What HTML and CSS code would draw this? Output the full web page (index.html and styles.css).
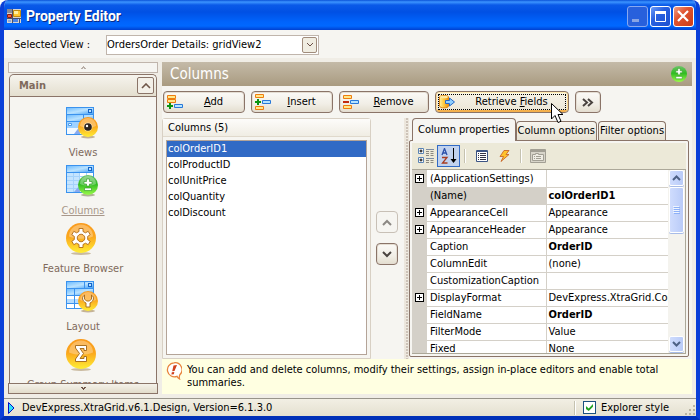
FILE: index.html
```html
<!DOCTYPE html>
<html lang="en">
<head>
    <meta charset="UTF-8">
    <meta name="viewport" content="width=device-width, initial-scale=1.0">
    <title>Property Editor</title>
    <link rel="stylesheet" href="styles.css">
</head>
<body>
    <!-- Shared gradients and shapes -->
    <svg class="defs" width="0" height="0" aria-hidden="true">
        <defs>
            <linearGradient id="orange" x1="0" y1="0" x2="0" y2="1">
                <stop offset="0" stop-color="#f99a1c"/>
                <stop offset="0.45" stop-color="#fba61d"/>
                <stop offset="1" stop-color="#ffee35"/>
            </linearGradient>
            <linearGradient id="green" x1="0" y1="0" x2="0" y2="1">
                <stop offset="0" stop-color="#6fc46a"/>
                <stop offset="0.45" stop-color="#2fbb22"/>
                <stop offset="1" stop-color="#9bfa4a"/>
            </linearGradient>
            <linearGradient id="blue" x1="0" y1="0" x2="1" y2="1">
                <stop offset="0" stop-color="#6fbcff"/>
                <stop offset="0.5" stop-color="#b9e2ff"/>
                <stop offset="1" stop-color="#4aa3f5"/>
            </linearGradient>
            <linearGradient id="gold" x1="0" y1="0" x2="1" y2="0">
                <stop offset="0" stop-color="#fff0a0"/>
                <stop offset="0.5" stop-color="#ffc83c"/>
                <stop offset="1" stop-color="#e98a10"/>
            </linearGradient>
            <symbol id="sheet" viewBox="0 0 28 28">
                <rect width="28" height="28" fill="#3a92ee"/>
                <rect x="1" y="1" width="26" height="6" fill="url(#blue)"/>
                <rect x="22.500" y="2.500" width="3" height="3" fill="#b9e2ff" stroke="#1464c8"/>
            </symbol>
            <symbol id="gloss" viewBox="0 0 20 20">
                <path d="M2 9a8 8 0 0 1 16 0c-5 2-11 2-16 0z" fill="#fff" opacity=".3"/>
            </symbol>
        </defs>
    </svg>

    <div class="window">
        <header class="titlebar">
            <svg width="14" height="14" viewBox="0 0 14 14" aria-hidden="true">
                <rect width="14" height="14" fill="#d6d3ce"/>
                <path d="M0 0h5v4H0z" fill="#8a8a96"/>
                <path d="M5.500 0v14M0 9.500h14M12.500 9v5" stroke="#49506c"/>
                <path d="M.5 5.500h4v3h-4z" fill="#f0603c" stroke="#8c1c10"/>
                <path d="M6.500 1.500h7v6h-7z" fill="#ffc832" stroke="#c08a10"/>
                <path d="M7 2h4v3H7z" fill="#fff0a0"/>
                <path d="M1 11h3v2H1z" fill="#90a8d8"/>
                <path d="M6 10h5v3H6z" fill="#4a84e8"/>
            </svg>
            <h1>Property Editor</h1>
            <button class="caption-btn minimize" aria-label="Minimize" disabled><svg width="18" height="18"><path d="M4 12h7v3H4z" fill="#88a4e4"/></svg></button>
            <button class="caption-btn" aria-label="Maximize"><svg width="18" height="18"><path d="M4.500 4.500h10v10h-10z" fill="none" stroke="#fff"/><path d="M4 4h11v3H4z" fill="#fff"/></svg></button>
            <button class="caption-btn close" aria-label="Close"><svg width="18" height="18"><path d="M4 4l10 10M14 4L4 14" stroke="#fff" stroke-width="2.200"/></svg></button>
        </header>

        <div class="view-bar">
            <label for="view">Selected View :</label>
            <div class="combo">
                <select id="view"><option>OrdersOrder Details: gridView2</option></select>
                <span class="combo-arrow"><svg width="8" height="6"><path d="M1 1l3 3 3-3" fill="none" stroke="#6b5048"/></svg></span>
            </div>
        </div>

        <div class="workspace">
            <nav class="sidebar">
                <button class="nav-scroll" aria-label="Scroll up"><svg width="5" height="3"><path d="M2 0h1v1h1v1h1v1H3V2H2v1H0V2h1V1h1z" fill="#b8aea6"/></svg></button>
                <div class="group">
                    <div class="group-header">
                        <h2>Main</h2>
                        <button class="collapse" aria-label="Collapse"><svg width="10" height="6"><path d="M1 5l4-4 4 4" fill="none" stroke="#6f5648" stroke-width="1.600"/></svg></button>
                    </div>
                    <div class="group-items">
                        <a href="#">
                            <svg width="34" height="32" viewBox="0 0 34 32">
                                <use href="#sheet" width="28" height="28"/>
                                <path d="M1 8h16v6H1zM18 8h9v6h-9z" fill="url(#blue)"/>
                                <path d="M1 15h26v6H1z" fill="#9fd2ff"/>
                                <path d="M1 21h26v6H1z" fill="#f2f9ff"/>
                                <path d="M2.500 16.500h3v2h-3z" fill="#fff" stroke="#4a9cee"/>
                                <path d="M8 27l6-8v8z" fill="#88aaf0"/>
                                <ellipse cx="22" cy="30" rx="7" ry="1.500" fill="#8a6428" opacity=".45"/>
                                <circle cx="22" cy="20" r="10" fill="url(#orange)"/>
                                <use href="#gloss" x="12" y="10" width="20" height="20"/>
                                <circle cx="22" cy="20" r="4.500" fill="#fff" opacity=".5"/>
                                <circle cx="22" cy="20" r="3.800" fill="#2c2420"/>
                                <circle cx="21" cy="19" r="1.200" fill="#fff"/>
                            </svg>
                            <span>Views</span>
                        </a>
                        <a href="#" class="active">
                            <svg width="34" height="32" viewBox="0 0 34 32">
                                <use href="#sheet" width="28" height="28"/>
                                <path d="M1 8h6v19H1zM8 8h6v19H8z" fill="#c4e4ff"/>
                                <path d="M14 8h13v19H14z" fill="#fff"/>
                                <path d="M1 11.500h26M1 15.500h26M1 19.500h26M1 23.500h26M7.500 8v19M13.500 8v19M20.500 8v19" stroke="#a4d2fa"/>
                                <path d="M8 27l6-7v7z" fill="#88aaf0"/>
                                <ellipse cx="22" cy="30" rx="7" ry="1.500" fill="#5a6428" opacity=".45"/>
                                <circle cx="22" cy="20" r="10" fill="url(#green)"/>
                                <use href="#gloss" x="12" y="10" width="20" height="20"/>
                                <path d="M20.500 14h3v2.500H26v2.500h-2.500v2h-3v-2H18v-2.500h2.500zM18.500 23h7v2.500h-7z" fill="#fff" stroke="#279518" stroke-width=".6"/>
                            </svg>
                            <span>Columns</span>
                        </a>
                        <a href="#">
                            <svg width="34" height="32" viewBox="0 0 34 32">
                                <ellipse cx="15" cy="30.500" rx="10" ry="1.500" fill="#8a6428" opacity=".4"/>
                                <circle cx="15" cy="15" r="15" fill="url(#orange)"/>
                                <use href="#gloss" width="30" height="30"/>
                                <path fill-rule="evenodd" d="M13 5.500h4v3l2.500 1.300 2.700-1.500 2 3.400-2.500 1.700v3.200l2.500 1.700-2 3.400-2.700-1.500-2.500 1.300v3h-4v-3l-2.500-1.300-2.700 1.500-2-3.400 2.500-1.700v-3.200l-2.500-1.700 2-3.400 2.700 1.500L13 8.500zM15 11.200a3.800 3.800 0 1 0 .1 0z" fill="#fff" stroke="#b06a14" stroke-width=".9"/>
                            </svg>
                            <span>Feature Browser</span>
                        </a>
                        <a href="#">
                            <svg width="34" height="32" viewBox="0 0 34 32">
                                <use href="#sheet" width="28" height="28"/>
                                <path d="M1 8h7v6H1zM9 8h18v6H9z" fill="url(#blue)"/>
                                <path d="M1 15h7v3H1zM9 15h8v3H9zM1 23h7v4H1zM9 23h8v4H9zM18 15h9v12h-9z" fill="#fff"/>
                                <path d="M1 18h7v4H1zM9 18h8v4H9z" fill="#b4dcff"/>
                                <path d="M18.500 1v6" stroke="#3a92ee"/>
                                <ellipse cx="22" cy="30" rx="7" ry="1.500" fill="#8a6428" opacity=".45"/>
                                <circle cx="22" cy="20" r="10" fill="url(#orange)"/>
                                <use href="#gloss" x="12" y="10" width="20" height="20"/>
                                <path d="M18.500 14v4l2 2h3l2-2v-4c3 2 2.500 6-1.500 8v4h-4v-4c-4-2-4.500-6-1.500-8z" fill="#fff" stroke="#a06414" stroke-width=".9"/>
                            </svg>
                            <span>Layout</span>
                        </a>
                        <a href="#">
                            <svg width="34" height="32" viewBox="0 0 34 32">
                                <ellipse cx="15" cy="30.500" rx="10" ry="1.500" fill="#8a6428" opacity=".4"/>
                                <circle cx="15" cy="15" r="15" fill="url(#orange)"/>
                                <use href="#gloss" width="30" height="30"/>
                                <path d="M9.500 6.500h11v5h-2.500v-2h-4l3.500 5-3.500 5h4v-2h2.500v5h-11v-2.500l4-5.500-4-5.500z" fill="#fff" stroke="#a06414" stroke-width=".9"/>
                            </svg>
                            <span>Group Summary Items</span>
                        </a>
                    </div>
                </div>
                <button class="nav-scroll down" aria-label="Scroll down"><svg width="5" height="3"><path d="M0 0h2v1h1V0h2v1H4v1H3v1H2V2H1V1H0z" fill="#6f5648"/></svg></button>
            </nav>

            <main class="content">
                <div class="page-title">
                    <h2>Columns</h2>
                    <svg width="16" height="16" viewBox="0 0 20 20">
                        <circle cx="10" cy="10" r="10" fill="url(#green)"/>
                        <path d="M8.500 3h3v3H14v2.500h-2.500v2.500h-3V8.500H6V6h2.500zM6 13h8v3H6z" fill="#fff" stroke="#279518" stroke-width=".6"/>
                    </svg>
                </div>

                <div class="page">
                    <div class="toolbar">
                        <button class="btn">
                            <svg width="16" height="14"><path d="M.5.500h8v3h-8zM.5 4.500h8v3h-8z" fill="#ffe88a" stroke="#ee7d10"/><path d="M3 8v6M0 11h6" stroke="#0a9410" stroke-width="2"/><path d="M7.500 9.500h8v3h-8z" fill="#b6e4ff" stroke="#2878d8"/></svg>
                            <span><u>A</u>dd</span>
                        </button>
                        <button class="btn">
                            <svg width="16" height="16"><path d="M.5.500h8v3h-8zM.5 12.500h8v3h-8z" fill="#ffe88a" stroke="#ee7d10"/><path d="M3 5v6M0 8h6" stroke="#0a9410" stroke-width="2"/><path d="M7.500 6.500h8v3h-8z" fill="#b6e4ff" stroke="#2878d8"/></svg>
                            <span><u>I</u>nsert</span>
                        </button>
                        <button class="btn remove">
                            <svg width="16" height="16"><path d="M.5 1.500h8v3h-8zM.5 11.500h8v3h-8z" fill="#ffe88a" stroke="#ee7d10"/><path d="M0 8h6" stroke="#c22a10" stroke-width="2"/><path d="M7.500 6.500h8v3h-8z" fill="#b6e4ff" stroke="#2878d8"/></svg>
                            <span><u>R</u>emove</span>
                        </button>
                        <button class="btn retrieve">
                            <svg width="16" height="14"><path d="M.5 2c0-2 9-2 9 0v9c0 2.500-9 2.500-9 0z" fill="url(#gold)" stroke="#e08a18"/><ellipse cx="5" cy="2" rx="4" ry="1.300" fill="#ffe9a0"/><path d="M6.500 5.500h4v-2.500l5 4-5 4V8.500h-4z" fill="#8fd0ff" stroke="#2668c8"/></svg>
                            <span>Retrieve <u>F</u>ields</span>
                            <svg class="cursor" width="13" height="21" viewBox="0 0 13 21"><path d="M.5.500v15.500l3.500-3.500 3 7 3-1.200-3-6.800h5z" fill="#fff" stroke="#000"/></svg>
                        </button>
                        <button class="btn more" aria-label="More"><svg width="12" height="9"><path d="M1 1l4 3.500L1 8M6 1l4 3.500L6 8" fill="none" stroke="#4a4440" stroke-width="2"/></svg></button>
                    </div>

                    <div class="panes">
                        <section class="column-list">
                            <label for="columns">Columns (5)</label>
                            <select id="columns" size="5">
                                <option selected>colOrderID1</option>
                                <option>colProductID</option>
                                <option>colUnitPrice</option>
                                <option>colQuantity</option>
                                <option>colDiscount</option>
                            </select>
                        </section>

                        <div class="movers">
                            <button class="btn" aria-label="Move up" disabled><svg width="10" height="7"><path d="M1 6l4-4 4 4" fill="none" stroke="#8c8884" stroke-width="2"/></svg></button>
                            <button class="btn" aria-label="Move down"><svg width="10" height="7"><path d="M1 1l4 4 4-4" fill="none" stroke="#4a4440" stroke-width="2"/></svg></button>
                        </div>

                        <div class="splitter"></div>

                        <section class="properties">
                            <div class="tabs" role="tablist">
                                <button role="tab" class="tab selected" aria-selected="true">Column properties</button>
                                <button role="tab" class="tab">Column options</button>
                                <button role="tab" class="tab">Filter options</button>
                            </div>
                            <div class="tab-page">
                                <div class="grid-tools">
                                    <button aria-label="Categorized"><svg width="16" height="16"><path d="M.5.500h5v5h-5zM.5 9.500h5v5h-5z" fill="#fff" stroke="#5a84b4"/><path d="M1.500 3h3M3 1.500v3M1.500 12h3M3 10.500v3" stroke="#000"/><path d="M8 1.500h8M8 10.500h8" stroke="#7a8ca4"/><path d="M8 3.500h3M12.500 3.500h3M8 5.500h3M12.500 5.500h3M8 7.500h3M12.500 7.500h3M8 12.500h3M12.500 12.500h3M8 14.500h3M12.500 14.500h3" stroke="#8a8880"/></svg></button>
                                    <button class="pressed" aria-label="Alphabetical"><svg width="16" height="16"><path d="M1 7l2.500-6.500L6 7M2 5h3" fill="none" stroke="#2c50a8" stroke-width="1.300"/><path d="M1 9.500h5L1.500 15H6.500" fill="none" stroke="#a83c20" stroke-width="1.300"/><path d="M12.500 0v13" stroke="#000"/><path d="M9.500 11h6l-3 4z" fill="#000"/></svg></button>
                                    <i class="divider"></i>
                                    <button aria-label="Properties"><svg width="12" height="12"><path d="M.5.500h11v11H.5z" fill="#fff" stroke="#3c5484"/><path d="M1 1h10" stroke="#3c5484" stroke-width="2"/><path d="M2 3.500h1M2 5.500h1M2 7.500h1M2 9.500h1M4 3.500h6M4 5.500h6M4 7.500h6M4 9.500h6" stroke="#334"/></svg></button>
                                    <button aria-label="Events"><svg width="11" height="12"><path d="M5 .5h5L7 4.500h3L2 11.500l2.500-5H1z" fill="#ffc22c" stroke="#c45a20" stroke-width=".8"/></svg></button>
                                    <i class="divider"></i>
                                    <button aria-label="Property Pages" disabled><svg width="16" height="14"><path d="M.5.500h15v13H.5z" fill="#d8d5ca" stroke="#a29f94"/><path d="M1 2h14" stroke="#a29f94" stroke-width="2"/><path d="M2.500 5.500h3v-1h3v1h5v6h-11z" fill="#efede4" stroke="#a29f94"/><path d="M4 7.500h1M6 7.500h5M4 9.500h1M6 9.500h5" stroke="#a29f94"/></svg></button>
                                </div>
                                <div class="prop-grid">
                                    <div class="prop-rows">
                                        <table>
                                            <tr><td><button class="expand" aria-label="Expand"></button></td><th>(ApplicationSettings)</th><td></td></tr>
                                            <tr class="current"><td></td><th>(Name)</th><td><b>colOrderID1</b></td></tr>
                                            <tr><td><button class="expand" aria-label="Expand"></button></td><th>AppearanceCell</th><td>Appearance</td></tr>
                                            <tr><td><button class="expand" aria-label="Expand"></button></td><th>AppearanceHeader</th><td>Appearance</td></tr>
                                            <tr><td></td><th>Caption</th><td><b>OrderID</b></td></tr>
                                            <tr><td></td><th>ColumnEdit</th><td>(none)</td></tr>
                                            <tr><td></td><th>CustomizationCaption</th><td></td></tr>
                                            <tr><td><button class="expand" aria-label="Expand"></button></td><th>DisplayFormat</th><td>DevExpress.XtraGrid.Col</td></tr>
                                            <tr><td></td><th>FieldName</th><td><b>OrderID</b></td></tr>
                                            <tr><td></td><th>FilterMode</th><td>Value</td></tr>
                                            <tr><td></td><th>Fixed</th><td>None</td></tr>
                                        </table>
                                    </div>
                                    <div class="scrollbar">
                                        <button aria-label="Scroll up"><svg width="9" height="6"><path d="M1 5l3.500-3.500L8 5" fill="none" stroke="#4d6185" stroke-width="2"/></svg></button>
                                        <div class="thumb"><svg width="7" height="8"><path d="M0 .5h6M0 2.500h6M0 4.500h6M0 6.500h6" stroke="#eef4fe"/><path d="M1 1.500h6M1 3.500h6M1 5.500h6M1 7.500h6" stroke="#8cb0f8"/></svg></div>
                                        <button class="last" aria-label="Scroll down"><svg width="9" height="6"><path d="M1 1l3.500 3.500L8 1" fill="none" stroke="#4d6185" stroke-width="2"/></svg></button>
                                    </div>
                                </div>
                            </div>
                        </section>
                    </div>
                </div>

                <div class="hint">
                    <svg width="16" height="18" viewBox="0 0 16 18">
                        <path d="M8 .8a7 7 0 1 0 3 13.500c.5 1.200 1 2 2.500 2.700-.5-1.500-.2-2.800.3-4.200A7 7 0 0 0 8 .8z" fill="#fff" stroke="#e8843c" stroke-width="1.300"/>
                        <path d="M7.500 3.500l3.500-.5-2.500 6-2.300.3zM5.800 10.300l2.500-.3-.4 2.300-2.500.3z" fill="#d0401c"/>
                    </svg>
                    <p>You can add and delete columns, modify their settings, assign in-place editors and enable total summaries.</p>
                </div>
            </main>
        </div>

        <footer class="statusbar">
            <svg width="7" height="12"><path d="M.5.500v11L6 6z" fill="#30e0f8" stroke="#0010c8"/></svg>
            <span class="version">DevExpress.XtraGrid.v6.1.Design, Version=6.1.3.0</span>
            <i class="divider"></i>
            <label><input type="checkbox" checked> Explorer style</label>
            <svg class="grip" width="12" height="12"><path d="M9 1h2v2H9zM5 5h2v2H5zM9 5h2v2H9zM1 9h2v2H1zM5 9h2v2H5zM9 9h2v2H9z" fill="#b8b4a2"/></svg>
        </footer>
    </div>
</body>
</html>
```

FILE: styles.css
```css
* {
    box-sizing: border-box;
    margin: 0;
    padding: 0;
}

body {
    background: #fff;
    color: #000;
    font: 11px/14px "DejaVu Sans Condensed", "DejaVu Sans", sans-serif;
}

button,
select {
    font: inherit;
    color: inherit;
    background: none;
    border: none;
    border-radius: 0;
}

svg {
    display: block;
    flex: none;
}

.defs {
    position: absolute;
}

/* Window frame */
.window {
    display: flex;
    flex-direction: column;
    height: 100vh;
    overflow: hidden;
    border: solid #0a3fd8;
    border-width: 0 4px 4px;
    border-bottom-color: #0030b8;
    border-radius: 8px 8px 0 0;
    background: #f0ede6;
}

.titlebar {
    display: flex;
    align-items: center;
    gap: 2px;
    height: 30px;
    flex: none;
    margin: 0 -4px;
    padding: 2px 6px 0 7px;
    background: linear-gradient(#0a52d8, #3c94ff 2px, #0a5ae8 5px, #0050e4 12px, #0064fc 22px, #0068ff 26px, #0040d0);
}

.titlebar h1 {
    flex: 1;
    padding-left: 3px;
    color: #fff;
    font: bold 14px/18px Roboto, sans-serif;
    text-shadow: 1px 1px #0a2c88;
}

.caption-btn {
    width: 21px;
    height: 21px;
    border: 1px solid #fff;
    border-radius: 3px;
    background: linear-gradient(135deg, #6c9cf8, #2860e0 40%, #1c50d0);
}

.caption-btn.minimize {
    border-color: #88a8f0;
    background: #2860dc;
}

.caption-btn.close {
    background: linear-gradient(135deg, #f0a088, #e05430 40%, #cc3c18);
}

/* View selector */
.view-bar {
    display: flex;
    align-items: center;
    gap: 16px;
    height: 28px;
    flex: none;
    padding: 2px 10px 0;
    background: #f6f5f1;
}

.combo {
    position: relative;
    width: 213px;
}

.combo select {
    appearance: none;
    display: block;
    width: 100%;
    height: 20px;
    padding: 0 20px 0 0;
    border: 1px solid #c0b5ac;
    background: #fff;
}

.combo-arrow {
    position: absolute;
    top: 2px;
    right: 2px;
    display: grid;
    place-items: center;
    width: 15px;
    height: 16px;
    border: 1px solid #a08c7c;
    border-radius: 2px;
    background: #f0ede2;
    pointer-events: none;
}

.workspace {
    display: flex;
    gap: 4px;
    flex: 1;
    min-height: 0;
    padding: 4px;
}

/* Sidebar */
.sidebar {
    display: flex;
    flex-direction: column;
    width: 150px;
    flex: none;
}

.nav-scroll {
    display: grid;
    place-items: center;
    height: 11px;
    flex: none;
    border: 1px solid #c0b5ac;
    background: #f6f5f1;
}

.nav-scroll.down {
    border-color: #8a7468;
    background: linear-gradient(#f4f2ea, #e2dccb);
}

.group {
    display: flex;
    flex-direction: column;
    flex: 1;
    min-height: 0;
    margin: 1px 1px 0;
    border: solid #8a7468;
    border-width: 1px 1px 0;
    border-radius: 5px 5px 0 0;
    background: #f6f5f1;
}

.group-header {
    display: flex;
    justify-content: space-between;
    align-items: center;
    height: 22px;
    flex: none;
    padding: 0 2px 0 9px;
    border-bottom: 1px solid #8a7468;
    border-radius: 5px 5px 0 0;
    background: linear-gradient(#f6f4ee, #e4dfcf);
}

.group-header h2 {
    color: #806a5c;
    font-size: 11px;
}

.collapse {
    display: grid;
    place-items: center;
    width: 17px;
    height: 17px;
    border: 1px solid #8a7468;
    border-radius: 2px;
    background: #f3f0e8;
}

.group-items {
    flex: 1;
    min-height: 0;
    padding-top: 10px;
    overflow: hidden;
}

.group-items a {
    display: flex;
    flex-direction: column;
    align-items: center;
    gap: 7px;
    height: 58px;
    color: #806a5c;
    text-decoration: none;
    white-space: nowrap;
}

.group-items a.active {
    color: #a8978a;
    text-decoration: underline;
}

/* Main area */
.content {
    display: flex;
    flex-direction: column;
    flex: 1;
    min-width: 0;
}

.page-title {
    display: flex;
    justify-content: space-between;
    align-items: center;
    height: 24px;
    flex: none;
    padding: 0 5px 0 8px;
    background: linear-gradient(#c4baa8, #a99b80);
}

.page-title h2 {
    color: #fff;
    font-size: 15px;
    font-weight: normal;
}

.page {
    display: flex;
    flex-direction: column;
    flex: 1;
    min-height: 0;
    background: #f6f5f1;
}

.toolbar {
    display: flex;
    gap: 6px;
    padding: 5px 1px;
}

.btn {
    position: relative;
    display: flex;
    align-items: center;
    justify-content: center;
    width: 82px;
    height: 22px;
    border: 1px solid #8a7468;
    border-radius: 4px;
    background: linear-gradient(#fbfaf7, #f1eee6 60%, #e4decf);
    box-shadow: inset 0 0 0 1px #e4ddd2;
}

.toolbar .btn {
    padding-left: 3px;
}

.btn span {
    flex: 1;
    text-align: center;
}

.btn.remove {
    width: 90px;
}

.btn.retrieve {
    width: 134px;
    background: linear-gradient(#fbf6e2, #f3efe4 30%, #ece6d6);
    box-shadow: inset 0 1px #ffeab0, inset 1px 0 #fcd890, inset -1px 0 #fcd890, inset 0 -2px #f4b04c;
}

.btn.retrieve::after {
    content: "";
    position: absolute;
    inset: 2px;
    border: 1px dotted #000;
}

.toolbar .btn.more {
    width: 26px;
    padding: 0;
}

.btn:disabled {
    border-color: #c8c0b6;
    background: #f6f5f1;
    box-shadow: none;
}

.cursor {
    position: absolute;
    top: 11px;
    left: 115px;
    z-index: 2;
}

.panes {
    display: flex;
    flex: 1;
    min-height: 0;
}

.column-list {
    display: flex;
    flex-direction: column;
    width: 209px;
    flex: none;
    border: 1px solid #d8d0c4;
    border-radius: 3px 3px 0 0;
}

.column-list label {
    height: 18px;
    padding: 2px 5px;
    border-bottom: 1px solid #e0d9cc;
    background: linear-gradient(#fdfcfa, #f0ede4);
}

.column-list select {
    flex: 1;
    margin: 3px;
    border: 1px solid #b4a498;
    background: #fff;
    overflow: hidden;
    outline: none;
}

.column-list option {
    height: 16px;
    min-height: 16px;
    padding: 1px;
    line-height: 14px;
}

.column-list option:checked {
    background: linear-gradient(#316ac5, #316ac5);
    -webkit-text-fill-color: #fff;
}

.movers {
    display: flex;
    flex-direction: column;
    gap: 10px;
    width: 33px;
    flex: none;
    padding: 93px 5px 0;
}

.movers .btn {
    width: 22px;
}

.splitter {
    width: 5px;
    flex: none;
    border: solid #ece6dc;
    border-width: 0 1px 0 2px;
    background: repeating-linear-gradient(#cdc3b8 0 2px, #f0ece4 2px 3px);
}

/* Property pages */
.properties {
    display: flex;
    flex-direction: column;
    flex: 1;
    min-width: 0;
    padding-right: 3px;
}

.tabs {
    display: flex;
    align-items: flex-end;
    height: 22px;
    flex: none;
    padding-left: 3px;
}

.tab {
    height: 19px;
    padding: 0 1px;
    border: 1px solid #8a7468;
    border-bottom: none;
    border-radius: 4px 4px 0 0;
    background: linear-gradient(#f8f6f0, #e6e1d2);
    white-space: nowrap;
}

.tab + .tab {
    margin-right: 1px;
}

.tab.selected {
    z-index: 1;
    height: 23px;
    margin-bottom: -1px;
    padding: 0 5px;
    background: #f6f5f1;
}

.tab-page {
    display: flex;
    flex-direction: column;
    flex: 1;
    min-height: 0;
    margin-bottom: 2px;
    padding: 2px;
    border: 1px solid #8a7468;
    border-radius: 2px;
    background: #f6f5f1;
}

.grid-tools {
    display: flex;
    align-items: center;
    height: 26px;
    flex: none;
    padding-left: 2px;
    background: #ece9d8;
}

.grid-tools button {
    display: grid;
    place-items: center;
    width: 23px;
    height: 22px;
}

.grid-tools .pressed {
    border: 1px solid #316ac5;
    background: #c1d2ee;
}

.divider {
    width: 2px;
    height: 14px;
    margin: 0 4px;
    border-left: 1px solid #c5c2b0;
    border-right: 1px solid #fff;
}

.prop-grid {
    display: flex;
    flex: 1;
    min-height: 0;
    border: 1px solid #aca899;
    border-width: 1px 1px 1px 0;
    background: #fff;
}

.prop-rows {
    flex: 1;
    min-width: 0;
    overflow: hidden;
    background: #fff;
}

table {
    width: 100%;
    table-layout: fixed;
    border-collapse: collapse;
}

tr {
    height: 17px;
}

th,
td {
    height: 17px;
    padding: 0 0 0 3px;
    border-bottom: 1px solid #d4d0c8;
    font-weight: normal;
    line-height: 15px;
    text-align: left;
    white-space: nowrap;
    overflow: hidden;
}

td:last-child {
    padding-left: 2px;
}

th {
    width: 119px;
    border-right: 1px solid #d4d0c8;
}

td:first-child {
    width: 15px;
    background: #d4d0c8;
}

.current th {
    background: #d4d0c8;
}

.expand {
    display: block;
    width: 9px;
    height: 9px;
    border: 1px solid #000;
    background:
        linear-gradient(#000, #000) center / 5px 1px no-repeat,
        linear-gradient(#000, #000) center / 1px 5px no-repeat,
        #fff;
}

.scrollbar {
    display: flex;
    flex-direction: column;
    width: 17px;
    padding: 0 1px;
    flex: none;
    background: #f4f3ee;
}

.scrollbar button,
.thumb {
    display: grid;
    place-items: center;
    height: 16px;
    flex: none;
    border: 1px solid #fff;
    border-radius: 2px;
    background: linear-gradient(90deg, #cfdcfd, #b9cbf8);
    box-shadow: 0 1px #a8bce8;
}

.scrollbar .thumb {
    height: 46px;
    margin-top: 1px;
}

.scrollbar .last {
    margin-top: auto;
    margin-bottom: 1px;
}

/* Hint */
.hint {
    display: flex;
    gap: 5px;
    height: 35px;
    flex: none;
    padding: 3px 4px;
    background: #ffffe1;
}

.hint p {
    line-height: 13px;
    padding-top: 1px;
}

/* Status bar */
.statusbar {
    display: flex;
    align-items: center;
    gap: 7px;
    height: 18px;
    flex: none;
    padding: 0 0 0 4px;
    border-top: 1px solid #98948a;
    background: linear-gradient(#f2efe4, #e4e0d0);
}

.version {
    flex: 1;
}

.statusbar label {
    display: flex;
    align-items: center;
    gap: 5px;
}

.statusbar input {
    appearance: none;
    display: grid;
    place-items: center;
    width: 13px;
    height: 13px;
    border: 1px solid #1c5180;
    background: #fff;
}

.statusbar input:checked::before {
    content: "";
    width: 7px;
    height: 7px;
    background: #21a121;
    clip-path: polygon(0 30%, 40% 65%, 100% 0, 100% 40%, 40% 100%, 0 70%);
}

.statusbar .divider {
    margin: 0;
}

.grip {
    align-self: flex-end;
    margin-left: 8px;
}
```
